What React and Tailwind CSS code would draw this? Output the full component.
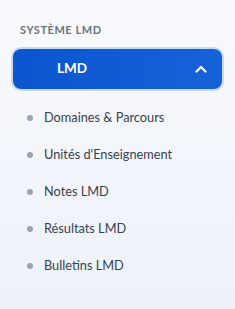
import React from "react";

const items = [
  "Domaines & Parcours",
  "Unités d'Enseignement",
  "Notes LMD",
  "Résultats LMD",
  "Bulletins LMD",
];

export default function App() {
  return (
    <div
      className="w-[235px] h-[309px] bg-gradient-to-b from-[#f8fafd] to-[#edf1f9] px-[13px] pt-[22px]"
      style={{ fontFamily: "Lato, 'Noto Sans', sans-serif" }}
    >
      <div className="px-[7px] h-4 flex items-center text-[11px] font-bold tracking-wider uppercase text-[#6b7280]">
        Système LMD
      </div>
      <div className="mt-[10.5px] h-10 rounded-lg ring-2 ring-[#cad9f3] bg-gradient-to-r from-[#0b55cf] to-[#1662d9] flex items-center pl-[44px] pr-[15px] justify-between">
        <span className="text-white text-[13.5px] font-bold">LMD</span>
        <svg width="12" height="8" viewBox="0 0 12 8" fill="none">
          <path
            d="M1.5 6.5 L6 2 L10.5 6.5"
            stroke="white"
            strokeWidth="2.2"
            strokeLinecap="round"
            strokeLinejoin="round"
          />
        </svg>
      </div>
      <div className="mt-[11px] flex flex-col px-[14px]">
        {items.map((t) => (
          <div key={t} className="h-[37px] flex items-center gap-[11px]">
            <span className="w-1.5 h-1.5 rounded-full bg-[#9aa3b2]" />
            <span className="text-[12.75px] text-[#374151]">{t}</span>
          </div>
        ))}
      </div>
    </div>
  );
}
